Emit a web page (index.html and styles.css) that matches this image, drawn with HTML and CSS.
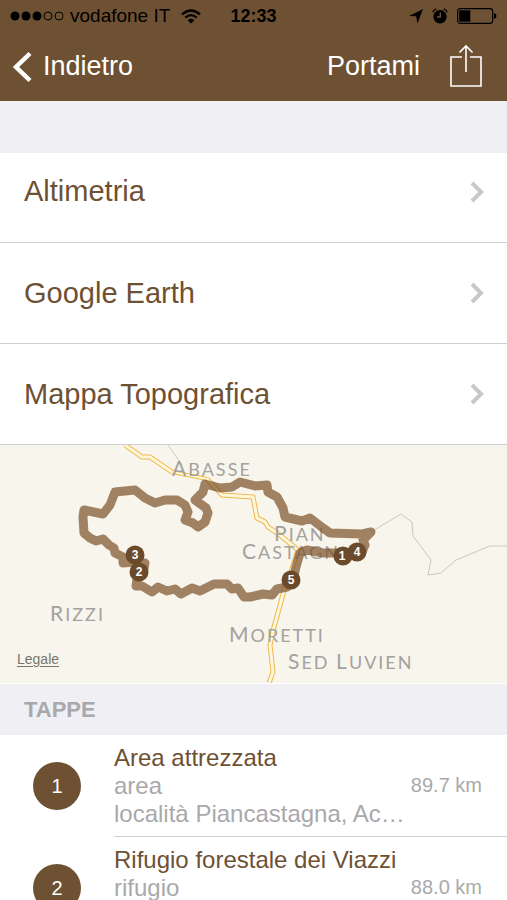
FILE: index.html
```html
<!DOCTYPE html>
<html lang="it">

<head>
    <meta charset="UTF-8">
    <meta name="viewport" content="width=device-width, initial-scale=1.0">
    <title>Percorso</title>
    <link rel="stylesheet" href="styles.css">
</head>

<body>

    <header class="header">
        <!-- Status bar -->
        <div class="status">
            <div class="status-left">
                <svg class="signal" width="54" height="10" viewBox="0 0 54 10">
                    <circle cx="5" cy="5" r="4.5"/>
                    <circle cx="16" cy="5" r="4.5"/>
                    <circle cx="27" cy="5" r="4.5"/>
                    <circle cx="38" cy="5" r="4" fill="none" stroke="#000"/>
                    <circle cx="49" cy="5" r="4" fill="none" stroke="#000"/>
                </svg>
                <span>vodafone IT</span>
                <svg class="wifi" width="20" height="15" viewBox="0 0 20 15" fill="none" stroke="#000" stroke-width="2.3">
                    <path d="M1 5.4Q10-2.4 19 5.4"/>
                    <path d="M4.2 8.7Q10 3.6 15.8 8.7"/>
                    <path d="M10 14.5L6.6 11.2Q10 8.4 13.4 11.2Z" fill="#000" stroke="none"/>
                </svg>
            </div>
            <span class="time">12:33</span>
            <div class="status-right">
                <svg width="14" height="15" viewBox="0 0 14 15"><path d="M14 0L8.400 14.500L7.200 7.300L0 7Z"/></svg>
                <svg width="16" height="16" viewBox="0 0 16 16">
                    <circle cx="8" cy="8.700" r="6.700"/>
                    <path d="M.8 4.300Q1.600 1.600 4.300.8M11.700.8Q14.400 1.600 15.200 4.300" fill="none" stroke="#000" stroke-width="1.400"/>
                    <path d="M8.300 4.400V9H5" fill="none" stroke="#6e5133" stroke-width="1.400"/>
                </svg>
                <svg width="40" height="16" viewBox="0 0 40 16">
                    <rect x=".7" y=".7" width="35" height="14.600" rx="2.500" fill="none" stroke="#000" stroke-width="1.200"/>
                    <rect x="2.300" y="2.300" width="11" height="11.400"/>
                    <path d="M37 5.200Q39.500 5.500 39.500 8T37 10.800Z"/>
                </svg>
            </div>
        </div>

        <!-- Navigation -->
        <nav class="nav">
            <button type="button" class="nav-button">
                <svg width="20" height="32" viewBox="0 0 20 32" fill="none" stroke="#fff" stroke-width="4.500"><path d="M18 2.500L4 16L18 29.500"/></svg>
                Indietro
            </button>
            <div class="nav-actions">
                <button type="button" class="nav-button">Portami</button>
                <button type="button" class="nav-button" aria-label="Condividi">
                    <svg width="32" height="46" viewBox="0 0 32 46" fill="none" stroke="#fff" stroke-width="1.600">
                        <path d="M12 13H1V42H31V13H20"/>
                        <path d="M16 28V2M9.500 8.500L16 2L22.500 8.500"/>
                    </svg>
                </button>
            </div>
        </nav>
    </header>

    <main class="content">
        <ul class="menu">
            <li>
                <a href="#" class="menu-link">Altimetria
                    <svg class="chevron" width="14" height="22" viewBox="0 0 14 22"><path d="M2 2L11 11L2 20"/></svg>
                </a>
            </li>
            <li>
                <a href="#" class="menu-link">Google Earth
                    <svg class="chevron" width="14" height="22" viewBox="0 0 14 22"><path d="M2 2L11 11L2 20"/></svg>
                </a>
            </li>
            <li>
                <a href="#" class="menu-link">Mappa Topografica
                    <svg class="chevron" width="14" height="22" viewBox="0 0 14 22"><path d="M2 2L11 11L2 20"/></svg>
                </a>
            </li>
        </ul>

        <div class="map">
            <svg class="map-drawing" viewBox="0 445 507 238">
                <path class="border" d="M168 445L182 465M371 532L401 514L412 522L413 536L431 560L428 575L441 573L456 560L490 546H507"/>

                <path class="road" d="M125 445L142 457H150L172 472M207 479L222 495L253 497L257 518L265 522L268 527L280 535L298 550L291 572L285 587L274 627L270 645L273 672L269 683"/>
                <path class="road-inner" d="M125 445L142 457H150L172 472M207 479L222 495L253 497L257 518L265 522L268 527L280 535L298 550L291 572L285 587L274 627L270 645L273 672L269 683"/>
                <path class="road road-small" d="M172 472L207 479"/>
                <path class="road-inner road-inner-small" d="M172 472L207 479"/>

                <g class="place">
                    <text x="172" y="476"><tspan class="initial">A</tspan>BASSE</text>
                    <text x="274" y="541"><tspan class="initial">P</tspan>IAN</text>
                    <text x="242" y="559"><tspan class="initial">C</tspan>ASTAGN</text>
                    <text x="50" y="621"><tspan class="initial">R</tspan>IZZI</text>
                    <text x="229" y="642"><tspan class="initial">M</tspan>ORETTI</text>
                    <text x="288" y="669"><tspan class="initial">S</tspan>ED <tspan class="initial">L</tspan>UVIEN</text>
                </g>

                <path class="route" d="M84 510L83 517L84 533L90 538L96 541L103 539L109 545L114 548L115 553L123 557L123 563L135 562L145 563L144 569L138 573L136 586L142 586L152 592L158 587L167 591L175 589L181 594L192 588L200 591L214 584H227L232 589L238 588L244 597L250 597L263 594L272 595L277 589L287 587L293 580L296 567L300 553L307 550L323 553H343L362 552L365 545L363 540L371 532L362 534L330 533L323 528L310 518L302 521L285 517L283 508L277 497L268 492L267 485L255 486L240 482L232 487L220 488L205 484L203 492L195 500L206 508L208 513L205 522L198 527L193 523L185 520L188 512L185 505L177 500H165L155 503L145 498L135 490L115 492L110 505L103 514Z"/>

                <g class="pin">
                    <circle cx="135" cy="555" r="9.500"/><text x="135" y="559">3</text>
                    <circle cx="139" cy="572" r="9.500"/><text x="139" y="576">2</text>
                    <circle cx="343" cy="556" r="9.500"/><text x="342" y="560">1</text>
                    <circle cx="357" cy="552" r="9.500"/><text x="357" y="556">4</text>
                    <circle cx="291" cy="580" r="9.500"/><text x="291" y="584">5</text>
                </g>
            </svg>
            <a href="#" class="legal">Legale</a>
        </div>

        <h2 class="section-title">TAPPE</h2>

        <ul class="stops">
            <li class="stop">
                <span class="stop-number">1</span>
                <div class="stop-body">
                    <div class="stop-text">
                        <h3>Area attrezzata</h3>
                        <p>area</p>
                        <p>località Piancastagna, Ac…</p>
                    </div>
                    <span class="distance">89.7 km</span>
                </div>
            </li>
            <li class="stop">
                <span class="stop-number">2</span>
                <div class="stop-body">
                    <div class="stop-text">
                        <h3>Rifugio forestale dei Viazzi</h3>
                        <p>rifugio</p>
                    </div>
                    <span class="distance">88.0 km</span>
                </div>
            </li>
        </ul>
    </main>

</body>

</html>
```

FILE: styles.css
```css
* {
    box-sizing: border-box;
}

body {
    display: flex;
    flex-direction: column;
    height: 100vh;
    margin: 0;
    font-family: "Liberation Sans", Arial, sans-serif;
    color: #6e5133;
    background-color: #fff;
}

ul,
h2,
h3,
p {
    margin: 0;
    padding: 0;
    list-style: none;
    font-weight: normal;
}

svg {
    flex-shrink: 0;
}

/* Header */
.header {
    flex-shrink: 0;
    background-color: #6e5133;
}

.status {
    display: grid;
    grid-template-columns: 1fr auto 1fr;
    align-items: center;
    height: 32px;
    padding: 0 10px;
    color: #000;
    font-size: 19px;
}

.status-left,
.status-right {
    display: flex;
    align-items: center;
    gap: 9px;
}

.status-left {
    gap: 6px;
}

.wifi {
    margin-left: 5px;
}

.status-right {
    justify-content: flex-end;
}

.time {
    font-size: 18px;
    font-weight: bold;
}

.nav {
    display: flex;
    align-items: center;
    justify-content: space-between;
    height: 69px;
    padding: 0 25px 0 12px;
}

.nav-actions {
    display: flex;
    align-items: center;
    gap: 30px;
}

.nav-button {
    display: flex;
    align-items: center;
    gap: 11px;
    padding: 0;
    border: none;
    background: none;
    color: #fff;
    font-family: inherit;
    font-size: 27px;
    cursor: pointer;
}

/* Scrolling content */
.content {
    flex: 1;
    min-height: 0;
    overflow-y: auto;
    scrollbar-width: none;
}

.menu {
    border-top: 52px solid #efeff4;
}

.menu-link {
    display: flex;
    align-items: center;
    justify-content: space-between;
    height: 101px;
    padding: 0 23px 0 24px;
    border-bottom: 1px solid #d0d0d2;
    color: inherit;
    font-size: 29px;
    text-decoration: none;
}

.menu li:first-child .menu-link {
    height: 90px;
    padding-bottom: 12px;
}

.chevron {
    fill: none;
    stroke: #c7c7cc;
    stroke-width: 4;
}

/* Map */
.map {
    position: relative;
    border-bottom: 1px solid #fff;
    background-color: #f8f5ec;
}

.map-drawing {
    display: block;
    width: 100%;
}

.border {
    fill: none;
    stroke: #cbc8c0;
}

.road {
    fill: none;
    stroke: #f0b64c;
    stroke-width: 5;
}

.road-inner {
    fill: none;
    stroke: #fdf8dc;
    stroke-width: 3;
}

.road-small {
    stroke-width: 4;
}

.road-inner-small {
    stroke-width: 2;
}

.place {
    fill: #a3a29e;
    font-family: Lato, sans-serif;
    font-size: 18px;
    letter-spacing: 2px;
}

.initial {
    font-size: 21px;
}

.route {
    fill: none;
    stroke: #7a5028;
    stroke-width: 9;
    stroke-linejoin: round;
    stroke-opacity: 0.7;
}

.pin {
    fill: #6b4b2b;
}

.pin text {
    fill: #fff;
    font-size: 12px;
    font-weight: bold;
    text-anchor: middle;
}

.legal {
    position: absolute;
    bottom: 16px;
    left: 17px;
    color: #77756c;
    font-size: 14px;
    text-underline-offset: 2px;
}

/* Stops */
.section-title {
    padding: 0 24px;
    background-color: #efeff4;
    color: #a9a9ad;
    font-size: 22px;
    font-weight: bold;
    line-height: 51px;
}

.stop {
    display: flex;
    align-items: center;
    gap: 33px;
    height: 102px;
    padding-left: 33px;
}

.stop-number {
    display: flex;
    flex-shrink: 0;
    align-items: center;
    justify-content: center;
    width: 48px;
    height: 48px;
    border-radius: 50%;
    background-color: #6e5133;
    color: #fff;
    font-size: 20px;
}

.stop-body {
    display: flex;
    flex: 1;
    align-items: center;
    justify-content: space-between;
    min-width: 0;
    height: 100%;
    padding-right: 25px;
    border-bottom: 1px solid #d0d0d2;
}

.stop-text {
    align-self: flex-start;
    min-width: 0;
    padding-top: 9px;
    line-height: 28px;
    white-space: nowrap;
}

.stop-text h3 {
    font-size: 24px;
}

.stop-text p {
    color: #a9a9ab;
    font-size: 24px;
}

.distance {
    flex-shrink: 0;
    margin-left: -20px;
    color: #a9a9ab;
    font-size: 20px;
    white-space: nowrap;
}
```
